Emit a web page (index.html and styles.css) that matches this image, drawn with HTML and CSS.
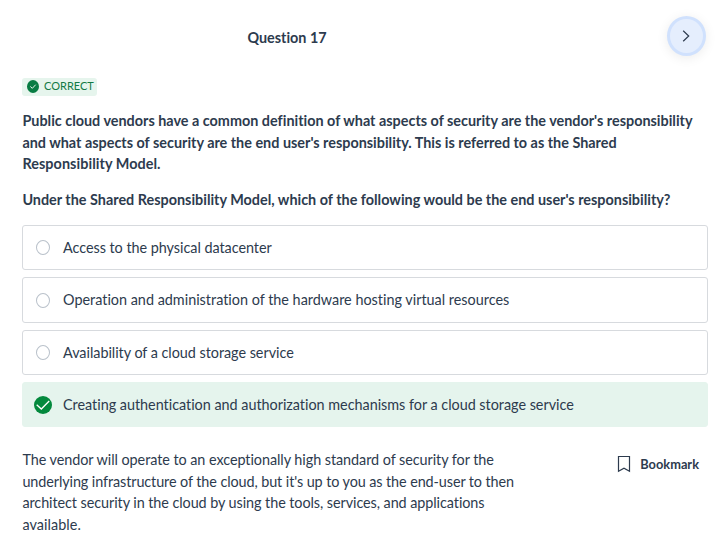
FILE: index.html
```html
<!DOCTYPE html>
<html lang="en">
<head>
<meta charset="utf-8">
<title>Question 17</title>
<link rel="stylesheet" href="styles.css">
</head>
<body>
<main class="quiz">
  <header class="topbar">
    <h1 class="title">Question 17</h1>
    <button class="next" aria-label="Next question"><svg width="15" height="16" viewBox="0 0 15 16"><path d="M4.2 2.7 9.7 8 4.2 13.3"/></svg></button>
  </header>
  <div class="status">
    <svg class="check" width="12" height="13" viewBox="0 0 18 18" preserveAspectRatio="none"><circle cx="9" cy="9" r="9"/><path d="M5 9 8 11.5 13 6.5"/></svg>
    <span>CORRECT</span>
  </div>
  <p class="question">Public cloud vendors have a common definition of what aspects of security are the vendor's responsibility<br>and what aspects of security are the end user's responsibility. This is referred to as the Shared<br><span class="ending">Responsibility Model.</span></p>
  <p class="question">Under the Shared Responsibility Model, which of the following would be the end user's responsibility?</p>
  <ul class="answers">
    <li class="answer"><span class="radio"></span>Access to the physical datacenter</li>
    <li class="answer wide"><span class="radio"></span>Operation and administration of the hardware hosting virtual resources</li>
    <li class="answer"><span class="radio"></span>Availability of a cloud storage service</li>
    <li class="answer correct"><svg class="check" width="18" height="18" viewBox="0 0 18 18"><circle cx="9" cy="9" r="9"/><path d="M2.7 8.7 7.3 13 15.2 5"/></svg>Creating authentication and authorization mechanisms for a cloud storage service</li>
  </ul>
  <footer class="details">
    <p class="explanation"><span class="lead">The vendor will operate to an exceptionally high standard of security for the</span><br>underlying infrastructure of the cloud, but it's up to you as the end-user to then<br><span class="loose">architect security in the cloud by using the tools, services, and applications</span><br><span class="ending">available.</span></p>
    <button class="bookmark"><svg width="14" height="18" viewBox="0 0 14 18"><path d="M1.5 1.5h11v14.8L7 13.2l-5.5 3.1z"/></svg>Bookmark</button>
  </footer>
</main>
</body>
</html>
```
FILE: styles.css
```css
* { box-sizing: border-box; }
body { margin: 0; background: #fff; color: #2d3b4e; font: 14.4px/21.6px Lato, sans-serif; font-variant-ligatures: none; }
button { border: 0; padding: 0; background: none; color: inherit; font: inherit; }
.quiz { height: 543px; padding: 16px 8px 0 22px; overflow: hidden; }
.topbar { display: grid; grid-template-columns: 530px 1fr; align-items: center; height: 40px; }
.title { margin: 3px 0 0; text-align: center; font-size: 14.4px; line-height: 20px; font-weight: 700; }
.next { justify-self: end; display: grid; place-items: center; width: 39px; height: 40px; margin-right: 2px; border: 3px solid #d0e1fd; border-radius: 50%; background: #e5eefd; box-shadow: 0 2px 12px rgba(0, 0, 0, .08); }
.next path { fill: none; stroke: #2d3b4e; stroke-width: 1.2; }
.status { display: flex; align-items: center; gap: 5px; width: 75px; height: 18px; margin-top: 22px; padding-left: 5px; border-radius: 3px; background: #e6f5ed; color: #127a45; font-size: 11px; line-height: 16px; }
.status span { margin-top: -2px; }
.check { flex: none; }
.check circle { fill: #03893d; }
.check path { fill: none; stroke: #fff; stroke-width: 1.3; }
.status .check { margin-top: -1px; }
.status .check circle { fill: #087c43; }
.question { margin: 14px 0 0; padding-left: .4px; font-weight: 700; }
.question + .question { margin-top: 14px; }
.ending { letter-spacing: .06px; }
.answers { display: grid; gap: 7.4px; margin: 14.6px 0 0; padding: 0; list-style: none; }
.answer { display: flex; align-items: center; height: 45px; padding-left: 12px; border: 1px solid #d7dade; border-radius: 3px; letter-spacing: -.035px; }
.wide { height: 45.4px; letter-spacing: 0; }
.radio { width: 14px; height: 15px; margin: 0 13px 0 1px; border: 1px solid #b9c1ca; border-radius: 50%; }
.correct { height: 44.6px; border-color: #e5f4ed; background: #e5f4ed; letter-spacing: -.02px; }
.correct .check { margin: 1px 11px 0 -1px; }
.answer:nth-child(3) { margin-bottom: -.4px; }
.details { display: flex; justify-content: space-between; align-items: flex-start; margin-top: 22.4px; }
.explanation { margin: 0; padding-left: .4px; letter-spacing: -.09px; }
.lead { letter-spacing: -.055px; }
.loose { letter-spacing: -.07px; }
.bookmark { display: flex; align-items: center; gap: 9px; margin: 5px 9px 0 0; font-size: 12.8px; line-height: 20px; font-weight: 700; }
.bookmark path { fill: none; stroke: #2d3b4e; stroke-width: 1.2; }
```
